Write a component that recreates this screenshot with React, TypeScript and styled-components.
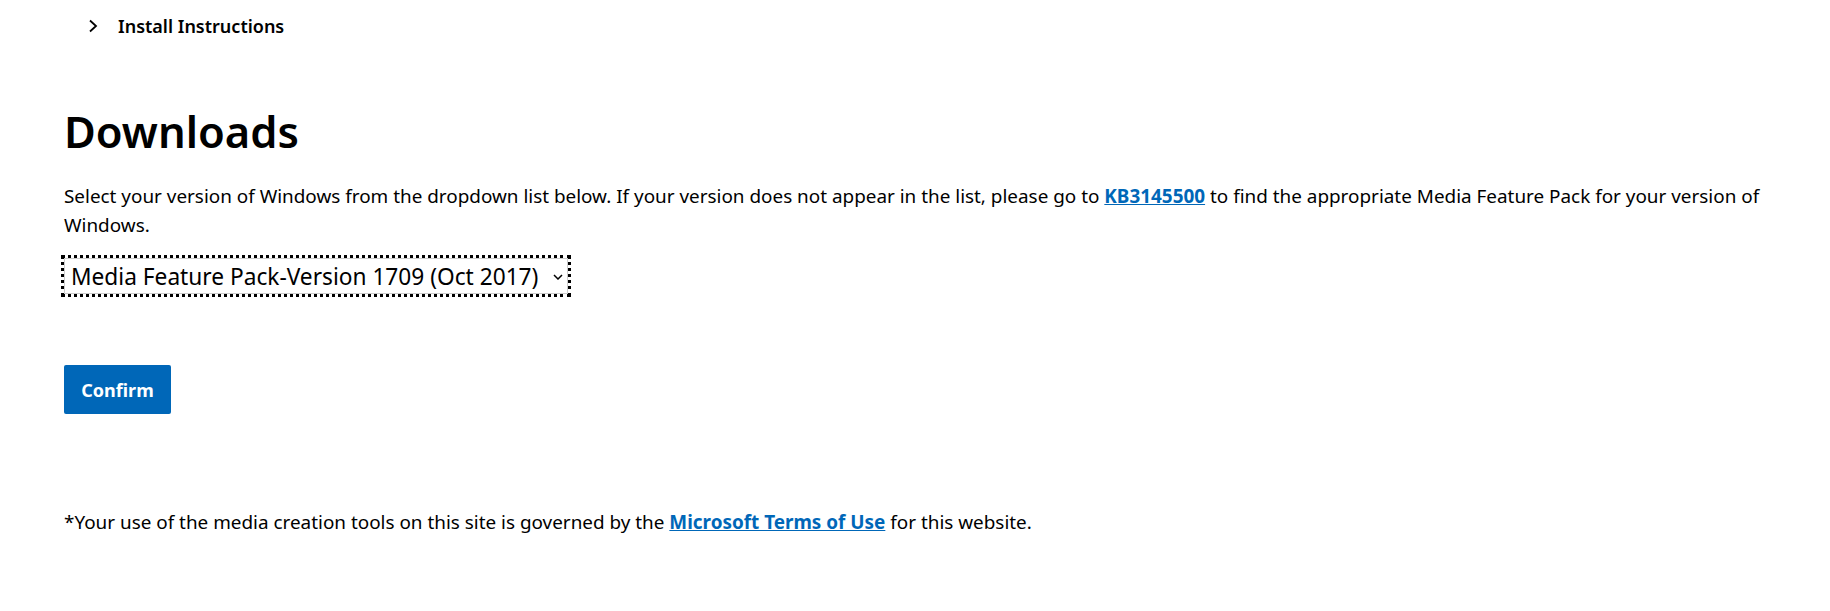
import styled, { createGlobalStyle } from "styled-components";

const GlobalStyle = createGlobalStyle`
  html, body {
    margin: 0;
    padding: 0;
    background: #fff;
    color: #000;
    font-family: "Noto Sans", "Open Sans", Arial, sans-serif;
  }
`;

const Page = styled.main`
  padding: 0 0 0 64px;
  width: 1716px;
`;

const Expander = styled.button`
  display: flex;
  align-items: center;
  gap: 20px;
  height: 52px;
  padding: 0 0 0 24px;
  border: 0;
  background: none;
  font-family: inherit;
  font-size: 18px;
  font-weight: 600;
  color: #000;
  cursor: pointer;
`;

const Heading = styled.h2`
  margin: 54px 0 0;
  font-size: 43.5px;
  line-height: 50px;
  font-weight: 600;
`;

const Text = styled.p<{ $top?: number }>`
  margin: ${(p) => p.$top ?? 0}px 0 0;
  font-size: 18.9px;
  line-height: 29px;
`;

const Link = styled.a`
  color: #0067b8;
  font-weight: 700;
  text-decoration: underline;
`;

const SelectWrap = styled.div`
  position: relative;
  display: flex;
  width: fit-content;
  margin-top: 18px;
  outline: 3px dotted #000;
`;

const Select = styled.select`
  appearance: none;
  box-sizing: border-box;
  width: 504px;
  height: 36px;
  padding: 0 18px 0 6px;
  border: 1px solid #ccc;
  border-radius: 0;
  background: #fff;
  font-family: inherit;
  font-size: 22.7px;
  color: #000;
  outline: none;
`;

const Caret = styled.svg`
  position: absolute;
  right: 5px;
  top: 16px;
  pointer-events: none;
`;

const Actions = styled.div`
  margin-top: 71px;
`;

const Button = styled.button`
  width: 107px;
  height: 49px;
  border: 0;
  border-radius: 2px;
  background: #0067b8;
  color: #fff;
  font-family: inherit;
  font-size: 18px;
  font-weight: 700;
  cursor: pointer;
`;

function Chevron() {
  return (
    <svg width="10" height="14" viewBox="0 0 10 14">
      <path d="M2 1.5 L8 7 L2 12.5" fill="none" stroke="#000" strokeWidth="1.8" />
    </svg>
  );
}

export default function App() {
  return (
    <>
      <GlobalStyle />
      <Page>
        <Expander type="button">
          <Chevron />
          Install Instructions
        </Expander>

        <Heading>Downloads</Heading>
        <Text $top={26}>
          Select your version of Windows from the dropdown list below. If your version does not
          appear in the list, please go to <Link href="#">KB3145500</Link> to find the appropriate
          Media Feature Pack for your version of Windows.
        </Text>

        <SelectWrap>
          <Select defaultValue="1709">
            <option value="1709">Media Feature Pack-Version 1709 (Oct 2017)</option>
          </Select>
          <Caret width="10" height="6" viewBox="0 0 10 6">
            <path d="M1 1 L5 5 L9 1" fill="none" stroke="#000" strokeWidth="1.5" />
          </Caret>
        </SelectWrap>

        <Actions>
          <Button type="button">Confirm</Button>
        </Actions>

        <Text $top={94}>
          *Your use of the media creation tools on this site is governed by the{" "}
          <Link href="#">Microsoft Terms of Use</Link> for this website.
        </Text>
      </Page>
    </>
  );
}
